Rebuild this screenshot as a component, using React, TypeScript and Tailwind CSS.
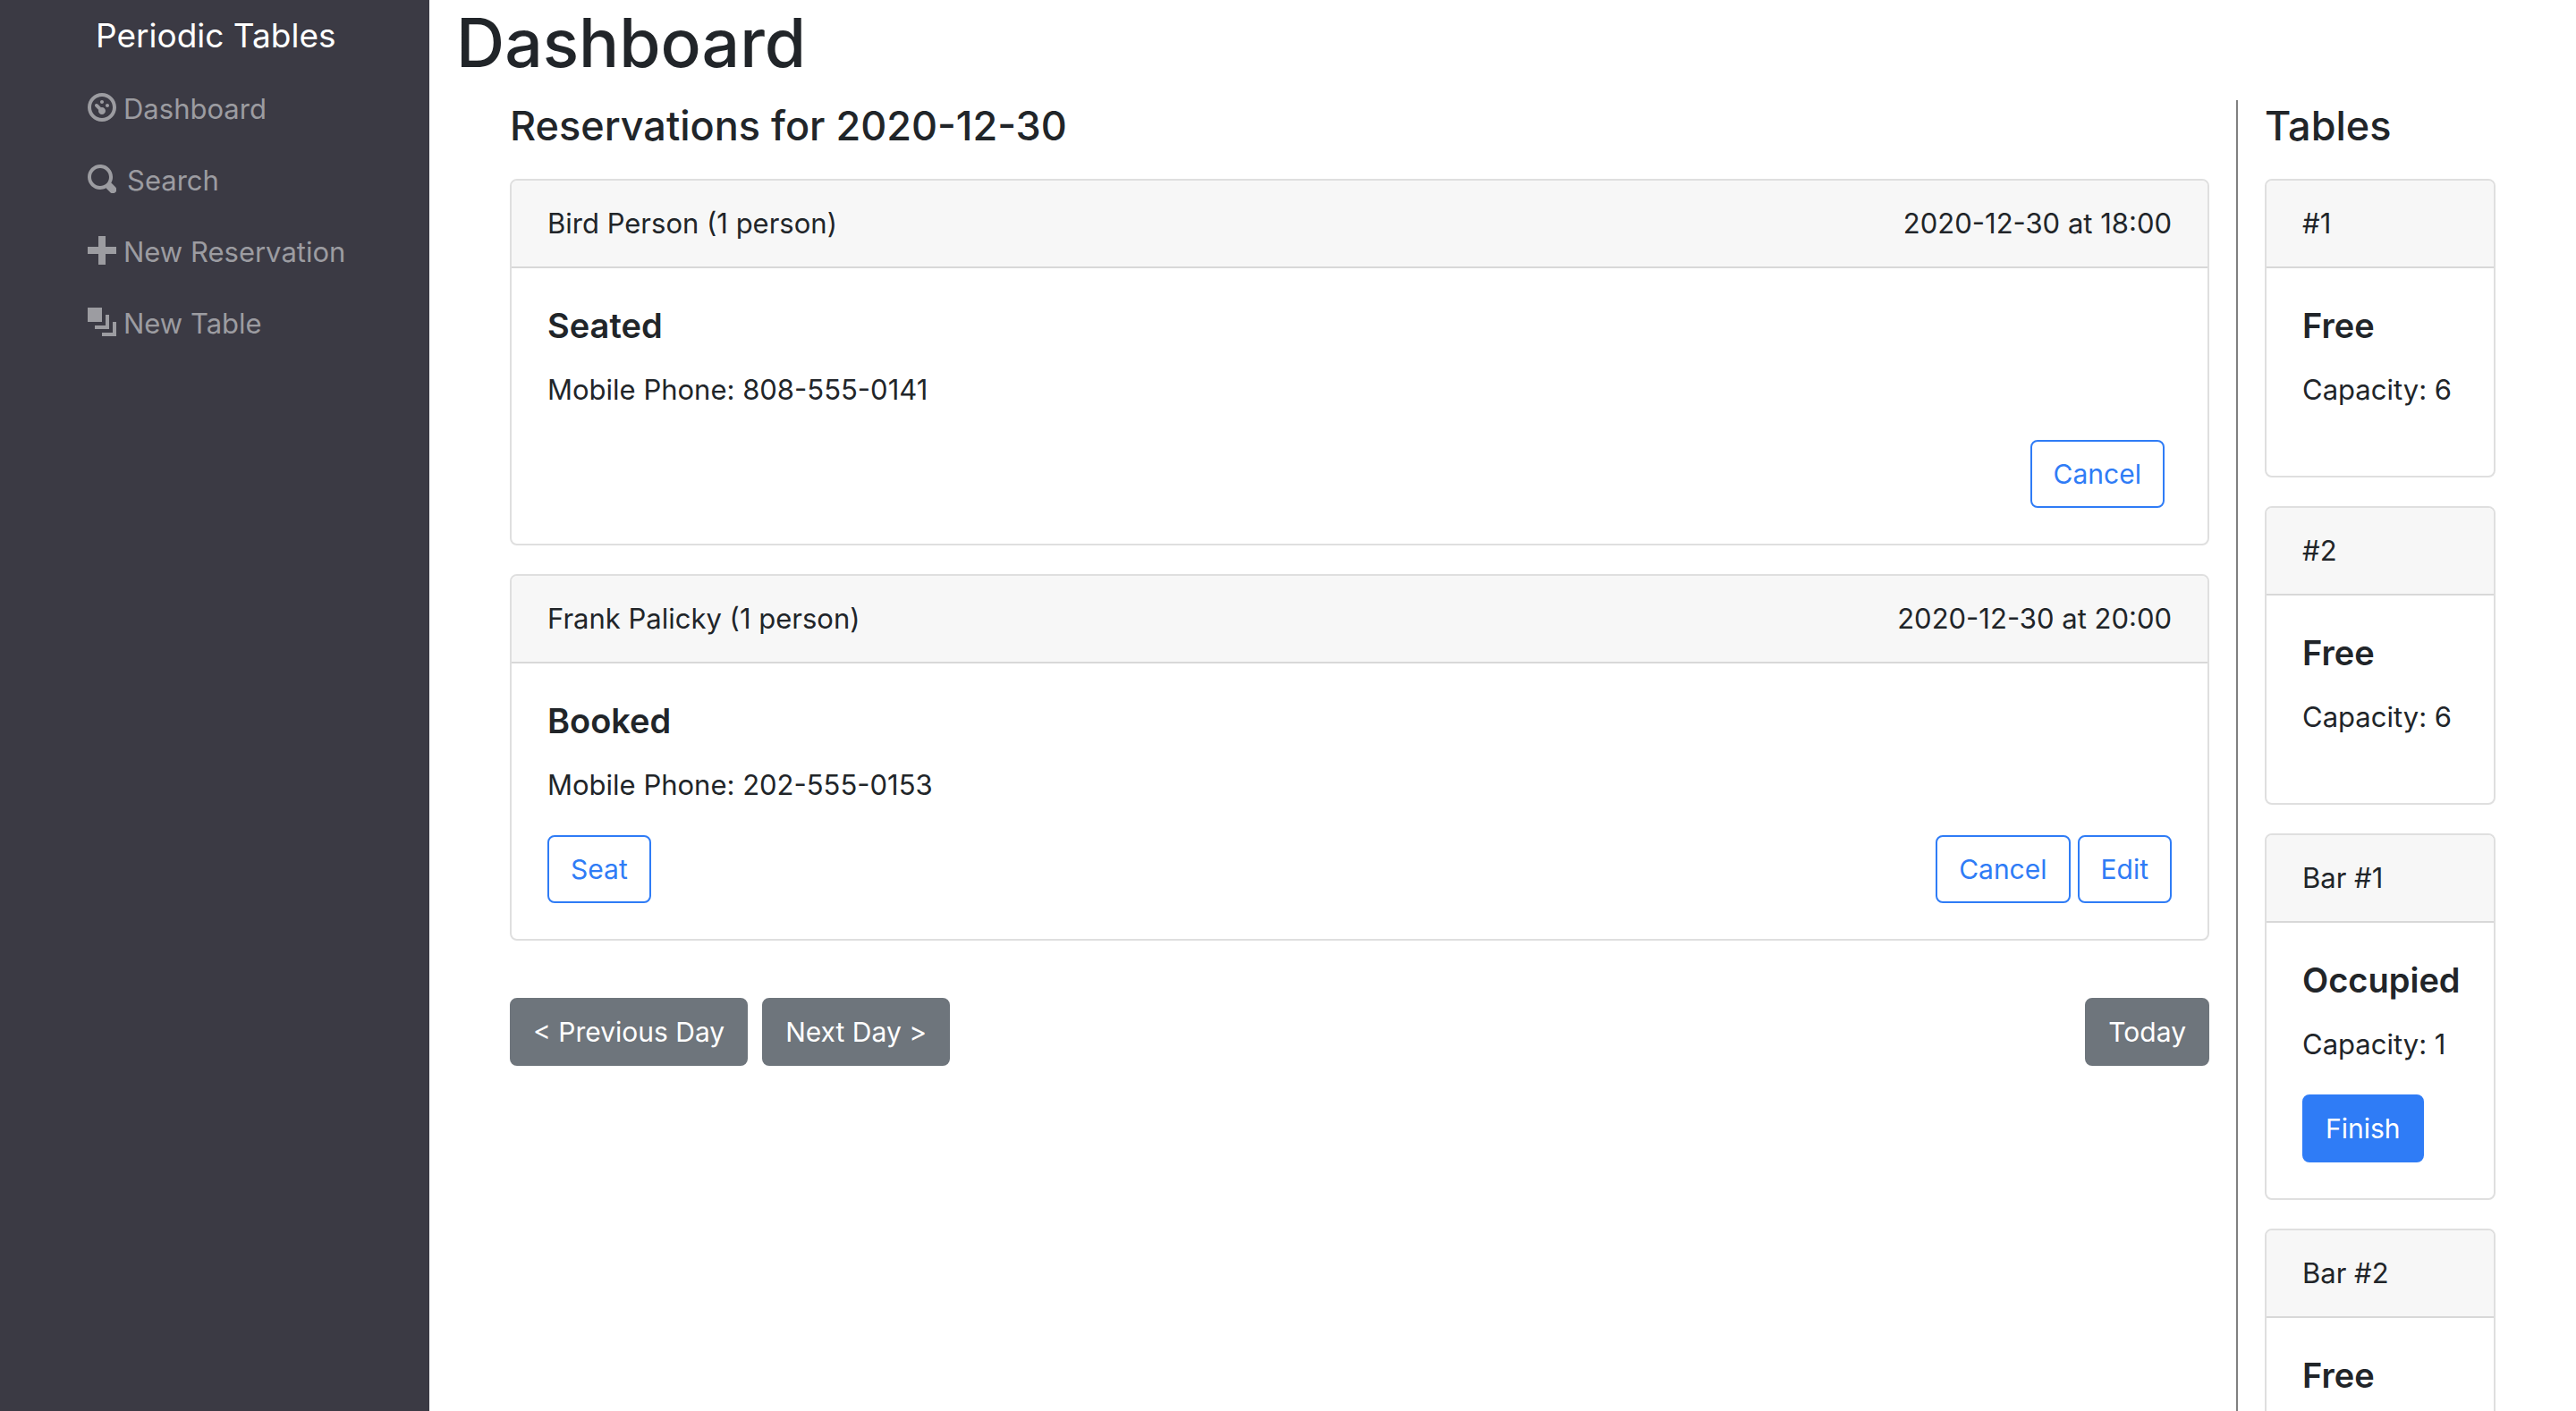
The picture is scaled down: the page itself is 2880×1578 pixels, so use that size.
import type { ReactNode } from "react";

const ICONS = {
  dashboard:
    "M4 0c-2.2 0-4 1.8-4 4s1.8 4 4 4 4-1.8 4-4-1.8-4-4-4zm0 1c1.66 0 3 1.34 3 3s-1.34 3-3 3-3-1.34-3-3 1.34-3 3-3zm0 1c-.28 0-.5.22-.5.5s.22.5.5.5.5-.22.5-.5-.22-.5-.5-.5zm-1.66 1a.5.5 0 0 0-.19.84l.91.91c-.02.08-.06.16-.06.25 0 .55.45 1 1 1s1-.45 1-1-.45-1-1-1c-.09 0-.17.04-.25.06l-.91-.91a.5.5 0 0 0-.44-.16.5.5 0 0 0-.06 0zm3.16 0c-.28 0-.5.22-.5.5s.22.5.5.5.5-.22.5-.5-.22-.5-.5-.5z",
  search:
    "M3.5 0c-1.93 0-3.5 1.57-3.5 3.5s1.57 3.5 3.5 3.5c.59 0 1.17-.14 1.66-.41a1 1 0 0 0 .13.13l1 1a1.02 1.02 0 1 0 1.44-1.44l-1-1a1 1 0 0 0-.16-.13c.27-.49.44-1.06.44-1.66 0-1.93-1.55-3.5-3.5-3.5zm0 1c1.39 0 2.5 1.11 2.5 2.5 0 .66-.24 1.27-.66 1.72l-.03.03a1 1 0 0 0-.13.13c-.44.4-1.04.63-1.69.63-1.39 0-2.5-1.11-2.5-2.5s1.11-2.5 2.5-2.5z",
  plus: "M3 0v3h-3v2h3v3h2v-3h3v-2h-3v-3h-2z",
  layers: "M0 0v4h4v-4h-4zm5 2v3h-3v1h4v-4h-1zm2 2v3h-3v1h4v-4h-1z",
};

const NAV: { icon: keyof typeof ICONS; label: string; gap: string }[] = [
  { icon: "dashboard", label: "Dashboard", gap: "gap-2" },
  { icon: "search", label: "Search", gap: "gap-3" },
  { icon: "plus", label: "New Reservation", gap: "gap-2" },
  { icon: "layers", label: "New Table", gap: "gap-2" },
];

const RESERVATIONS = [
  { name: "Bird Person (1 person)", time: "2020-12-30 at 18:00", status: "Seated", phone: "808-555-0141" },
  { name: "Frank Palicky (1 person)", time: "2020-12-30 at 20:00", status: "Booked", phone: "202-555-0153" },
];

const TABLES = [
  { name: "#1", status: "Free", capacity: 6 },
  { name: "#2", status: "Free", capacity: 6 },
  { name: "Bar #1", status: "Occupied", capacity: 1 },
  { name: "Bar #2", status: "Free", capacity: null },
];

const VARIANTS = {
  outline: "border-[#2f7cf6] text-[#2f7cf6]",
  primary: "border-[#2f7cf6] bg-[#2f7cf6] text-white",
  secondary: "border-[#6e757c] bg-[#6e757c] text-white",
};

function Button({ variant, children }: { variant: keyof typeof VARIANTS; children: ReactNode }) {
  return (
    <button
      type="button"
      className={`h-[76px] cursor-pointer whitespace-nowrap rounded-lg border-2 px-6 text-[30px] ${VARIANTS[variant]}`}
    >
      {children}
    </button>
  );
}

function Card({ header, title, text, children }: { header: ReactNode; title: string; text?: string; children?: ReactNode }) {
  return (
    <article className="mb-8 overflow-hidden rounded-lg border-2 border-[#dfdfdf] bg-white">
      <header className="flex justify-between border-b-2 border-[#d8d8d8] bg-[#f7f7f7] px-10 py-6">{header}</header>
      <div className="p-10">
        <h3 className="mb-6 text-[38px] leading-[48px] font-semibold">{title}</h3>
        {text && <p className="mb-8">{text}</p>}
        {children}
      </div>
    </article>
  );
}

export default function App() {
  return (
    <div className="flex h-screen bg-white font-[Inter,'Liberation_Sans',sans-serif] text-[31px] leading-[48px] text-[#212529]">
      <nav className="w-1/6 shrink-0 bg-[#3b3a44] text-[#9c9ca1]">
        <a href="#" className="block pt-2.5 pl-[107px] text-[37px] leading-[60px] text-white">
          Periodic Tables
        </a>
        <ul className="mt-3 pl-[98px]">
          {NAV.map((item) => (
            <li key={item.label}>
              <a href="#" className={`flex h-20 items-center ${item.gap}`}>
                <svg viewBox="0 0 8 8" className="mb-1 size-8 fill-current" aria-hidden="true">
                  <path d={ICONS[item.icon]} />
                </svg>
                {item.label}
              </a>
            </li>
          ))}
        </ul>
      </nav>

      <main className="min-w-0 flex-1 overflow-y-auto px-[30px] [scrollbar-width:none]">
        <h1 className="mb-4 text-[75px] leading-[96px] font-medium">Dashboard</h1>
        <div className="flex px-[60px]">
          <section className="min-w-0 flex-1 pr-[30px]">
            <h2 className="mb-[30px] text-[45px] leading-[58px] font-medium">Reservations for 2020-12-30</h2>
            {RESERVATIONS.map((r) => (
              <Card
                key={r.name}
                title={r.status}
                text={`Mobile Phone: ${r.phone}`}
                header={
                  <>
                    <span>{r.name}</span>
                    <span>{r.time}</span>
                  </>
                }
              >
                {r.status === "Booked" ? (
                  <div className="flex justify-between">
                    <Button variant="outline">Seat</Button>
                    <div className="flex gap-2">
                      <Button variant="outline">Cancel</Button>
                      <Button variant="outline">Edit</Button>
                    </div>
                  </div>
                ) : (
                  <div className="flex justify-end pr-2">
                    <Button variant="outline">Cancel</Button>
                  </div>
                )}
              </Card>
            ))}
            <div className="mt-16 flex justify-between">
              <div className="flex gap-4">
                <Button variant="secondary">&lt; Previous Day</Button>
                <Button variant="secondary">Next Day &gt;</Button>
              </div>
              <Button variant="secondary">Today</Button>
            </div>
          </section>

          <section className="w-[290px] shrink-0 border-l-2 border-[#808080] pl-[30px]">
            <h2 className="mb-[30px] text-[45px] leading-[58px] font-medium">Tables</h2>
            {TABLES.map((t) => (
              <Card
                key={t.name}
                title={t.status}
                text={t.capacity === null ? undefined : `Capacity: ${t.capacity}`}
                header={t.name}
              >
                {t.status === "Occupied" && <Button variant="primary">Finish</Button>}
              </Card>
            ))}
          </section>
        </div>
      </main>
    </div>
  );
}
